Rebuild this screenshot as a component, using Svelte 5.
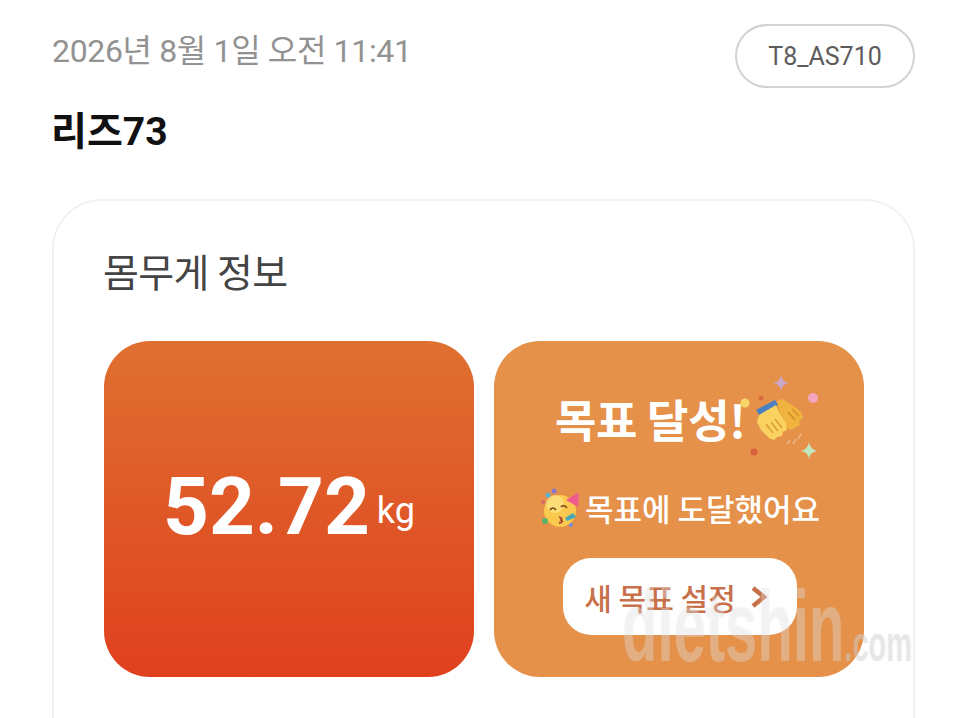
<script lang="ts">
    const weight = { value: '52.72', unit: 'kg' };
</script>

<div class="page">
    <header class="top">
        <span class="date">2026년 8월 1일 오전 11:41</span>
        <span class="device">T8_AS710</span>
    </header>
    <h1 class="name">리즈73</h1>

    <section class="card">
        <h2>몸무게 정보</h2>
        <div class="tiles">
            <div class="tile weight">
                <span class="value">{weight.value}</span>
                <span class="unit">{weight.unit}</span>
            </div>
            <div class="tile goal">
                <div class="goal-title">
                    <span>목표 달성!</span>
                    <svg class="clap" viewBox="0 0 110 110" width="110" height="110" aria-hidden="true">
                        <circle cx="15" cy="43" r="4.5" fill="#f7d768" />
                        <circle cx="31" cy="38" r="2.5" fill="#dd6a3e" />
                        <circle cx="83" cy="38" r="5" fill="#f4a6c0" />
                        <circle cx="24" cy="92" r="3.5" fill="#d8603a" />
                        <path d="M51 15 Q52 22 59 23 Q52 24 51 31 Q50 24 43 23 Q50 22 51 15Z" fill="#c9a7c6" />
                        <path d="M79 82 Q80 89 87 91 Q80 92 79 99 Q78 92 71 91 Q78 89 79 82Z" fill="#bfe6bd" />
                        <path d="M47 41 L52 39 L62 45 L71 52 L73 58 L69 61 L70 65 L64 68 L60 70 L52 62Z" fill="#f0b43e" />
                        <path d="M26 50 L45 40 L48 45 L30 56Z" fill="#4a7fc0" />
                        <path d="M29 55 L46 45 L50 54 L56 63 L57 70 L53 72 L52 76 L47 77 L44 80 L39 78 L31 70 L27 62Z" fill="#fad25f" />
                        <path d="M36 64 L43 73 M41 62 L48 71 M45 59 L52 68" stroke="#d99a30" stroke-width="1.3" fill="none" />
                        <path d="M58 52 L65 60 M62 49 L69 56" stroke="#d08a28" stroke-width="1.3" fill="none" />
                        <path d="M57 84 L60 80 M63 84 L66 79 M68 79 L71 74" stroke="#e8b88c" stroke-width="1.5" fill="none" />
                    </svg>
                </div>
                <div class="reached">
                    <svg class="party" viewBox="0 0 42 42" width="42" height="42" aria-hidden="true">
                        <circle cx="20" cy="24" r="16" fill="#fbc94f" />
                        <circle cx="15" cy="17" r="9" fill="#fde68a" opacity="0.7" />
                        <path d="M26 13 L39 5 L38 20Z" fill="#ef5d8e" />
                        <path d="M10 23 Q13 19 16 23 M21 20 Q24 17 27 21" stroke="#7a4a16" stroke-width="1.7" fill="none" />
                        <path d="M19 30 Q23 31 21 33 Q24 35 19 36" stroke="#a5402c" stroke-width="1.8" fill="none" />
                        <path d="M25 31 L33 26 L36 30 L27 34Z" fill="#45a7b8" />
                        <circle cx="8" cy="8" r="2.5" fill="#5fb0d8" />
                        <circle cx="14" cy="4" r="2.5" fill="#8a78d0" />
                        <circle cx="5" cy="34" r="3" fill="#58b26c" />
                        <circle cx="3" cy="15" r="2" fill="#d96a6a" />
                        <circle cx="31" cy="38" r="2" fill="#6f90d8" />
                    </svg>
                    <span>목표에 도달했어요</span>
                </div>
                <button class="new-goal">
                    새 목표 설정
                    <svg viewBox="0 0 18 24" width="18" height="24" aria-hidden="true">
                        <path d="M3 3 L14 12 L3 21" stroke="#c8704a" stroke-width="4.5" fill="none" />
                    </svg>
                </button>
            </div>
        </div>
    </section>

    <div class="watermark">dietshin<small>.com</small></div>
</div>

<style>
    :global(body) {
        margin: 0;
        background: #fff;
    }

    .page {
        position: relative;
        height: 718px;
        overflow: hidden;
        padding: 24px 45px 0 52px;
        box-sizing: border-box;
        font-family: "Noto Sans CJK KR", Roboto, sans-serif;
    }

    .top {
        display: flex;
        justify-content: space-between;
        align-items: flex-start;
    }

    .date {
        font-size: 32px;
        line-height: 54px;
        letter-spacing: -0.35px;
        color: #929292;
        font-family: Roboto, "Noto Sans CJK KR", sans-serif;
    }

    .device {
        width: 180px;
        height: 64px;
        box-sizing: border-box;
        border: 2px solid #d2d2d2;
        border-radius: 32px;
        display: flex;
        align-items: center;
        justify-content: center;
        font-family: Roboto, sans-serif;
        font-size: 25px;
        color: #5c5c5c;
    }

    .name {
        margin: 15px 0 0 -1px;
        font-size: 39px;
        line-height: 58px;
        font-weight: 700;
        color: #111;
        font-family: Roboto, "Noto Sans CJK KR", sans-serif;
    }

    .card {
        margin: 38px 0 0;
        height: 600px;
        box-sizing: border-box;
        border: 2px solid #f1f1f1;
        border-radius: 50px;
        padding: 39px 49px 39px 50px;
    }

    h2 {
        margin: 0 0 0 -1px;
        font-size: 39px;
        line-height: 60px;
        font-weight: 400;
        letter-spacing: -0.6px;
        color: #444;
    }

    .tiles {
        margin-top: 41px;
        display: flex;
        gap: 20px;
    }

    .tile {
        width: 370px;
        height: 336px;
        border-radius: 46px;
        color: #fff;
        box-sizing: border-box;
    }

    .weight {
        background: linear-gradient(#df7031, #e0401e);
        display: flex;
        align-items: baseline;
        justify-content: center;
        padding-top: 118px;
        gap: 7px;
    }

    .value {
        font-family: Roboto, sans-serif;
        font-size: 80px;
        line-height: 96px;
        font-weight: 700;
    }

    .unit {
        font-family: Roboto, sans-serif;
        font-size: 36px;
        position: relative;
        top: -11px;
    }

    .goal {
        background: #e59149;
        display: flex;
        flex-direction: column;
        align-items: flex-start;
    }

    .goal-title {
        position: relative;
        margin: 48px 0 0 61px;
        height: 60px;
        font-size: 45px;
        line-height: 60px;
        font-weight: 700;
        letter-spacing: -0.3px;
    }

    .clap {
        position: absolute;
        left: 175px;
        top: -29px;
    }

    .reached {
        margin: 36px 0 0 46px;
        display: flex;
        align-items: center;
        gap: 3px;
        font-size: 31px;
        line-height: 46px;
        font-weight: 500;
    }

    .new-goal {
        margin: 27px 0 0 69px;
        width: 234px;
        height: 77px;
        border: 0;
        border-radius: 28px;
        background: #fff;
        color: #c8704a;
        font: 500 30px "Noto Sans CJK KR", sans-serif;
        display: flex;
        align-items: center;
        justify-content: center;
        gap: 14px;
        padding: 0 8px 0 0;
    }

    .watermark {
        position: absolute;
        left: 622px;
        top: 580px;
        font-family: "Liberation Sans", sans-serif;
        font-size: 100px;
        line-height: 92px;
        font-weight: 700;
        color: rgba(255, 255, 255, 0.2);
        text-shadow: 0 0 2px rgba(190, 190, 190, 0.25);
        transform: scaleX(0.58);
        transform-origin: left top;
        white-space: nowrap;
    }

    .watermark small {
        font-size: 50px;
        color: rgba(215, 215, 215, 0.35);
    }
</style>
